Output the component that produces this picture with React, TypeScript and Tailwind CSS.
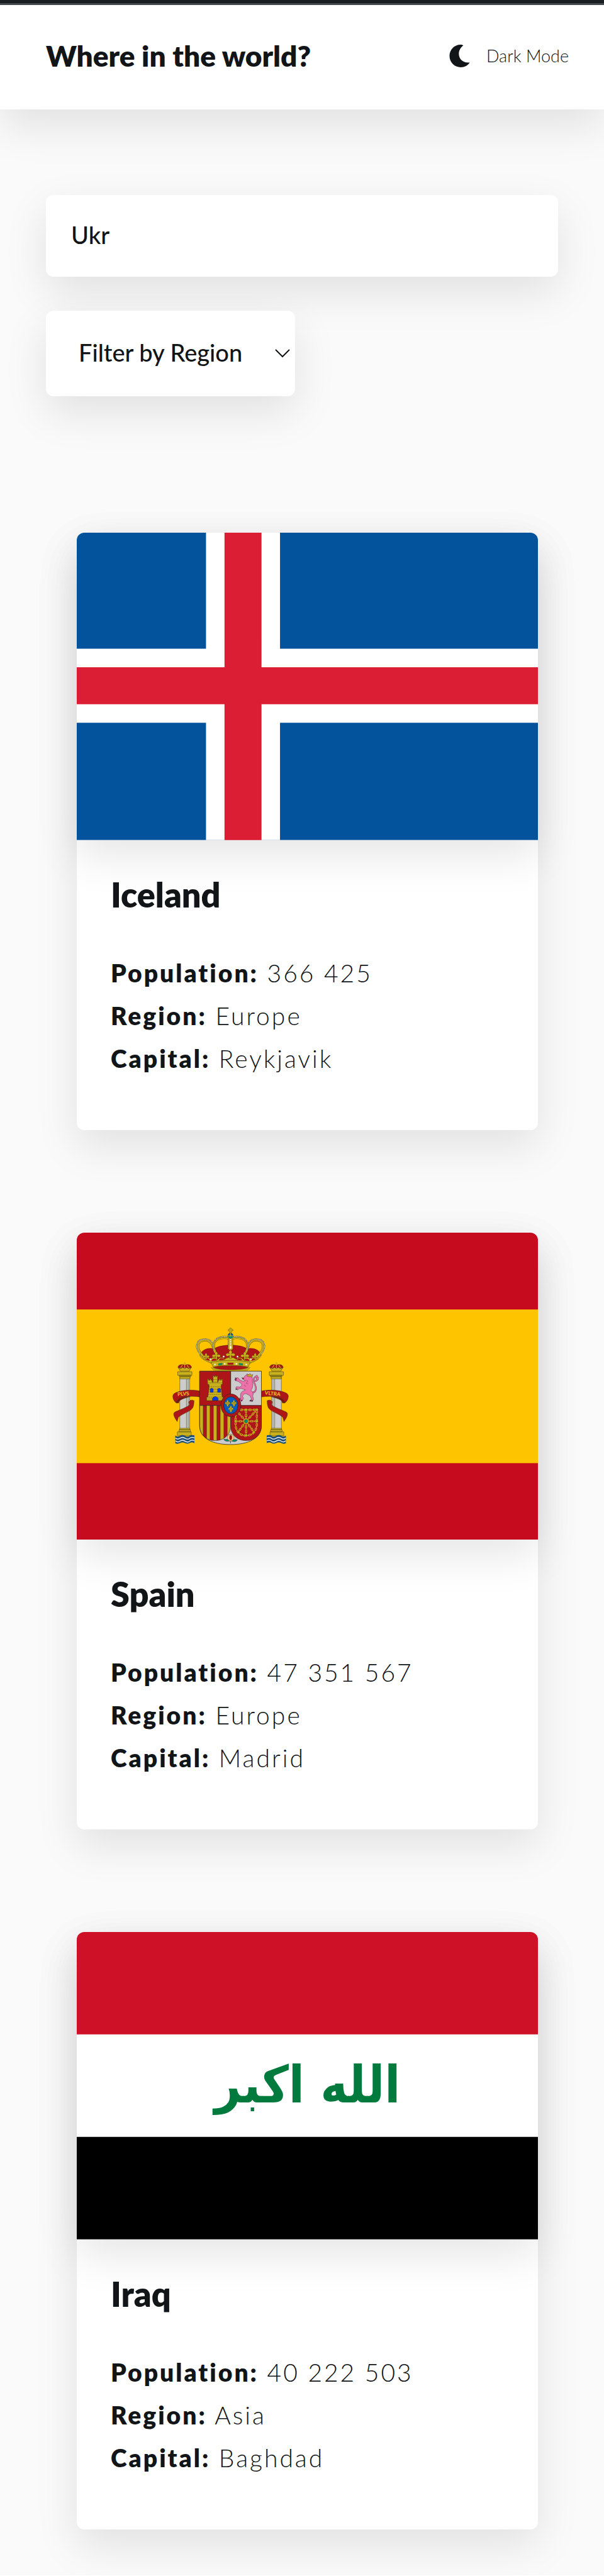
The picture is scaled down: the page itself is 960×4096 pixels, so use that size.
import { useState } from 'react';
import type { ReactNode } from 'react';

const SOFT_SHADOW = 'shadow-[0_25px_68px_rgba(0,0,0,0.1)]';

function IcelandFlag() {
  return (
    <svg viewBox="0 0 810 540" className="block size-full" role="img" aria-label="Flag of Iceland">
      <rect width="810" height="540" fill="#02529c" />
      <path d="M227 0H357V540H227ZM0 204H810V334H0Z" fill="#fff" />
      <path d="M259.500 0H324.500V540H259.500ZM0 236.500H810V301.500H0Z" fill="#dc1e35" />
    </svg>
  );
}

function Blossom({ x, y, s = 1 }: { x: number; y: number; s?: number }) {
  return (
    <g transform={`translate(${x} ${y}) scale(${s})`} fill="#c8b11d" stroke="#5a4a0c" strokeWidth="1.500">
      <path d="M0 -20C9 -14 9 -6 4 -1C12 -8 22 -4 22 3C20 11 10 11 4 5L5 20H-5L-4 5C-10 11 -20 11 -22 3C-22 -4 -12 -8 -4 -1C-9 -6 -9 -14 0 -20Z" />
    </g>
  );
}

function CrownArches() {
  return (
    <g fill="none" strokeLinecap="round">
      <path d="M198 186C158 145 168 104 212 104C238 104 252 124 260 160" stroke="#5a4a0c" strokeWidth="13" />
      <path d="M198 186C158 145 168 104 212 104C238 104 252 124 260 160" stroke="#c8b11d" strokeWidth="10" />
      <path d="M264 168C242 115 268 84 338 94" stroke="#5a4a0c" strokeWidth="13" />
      <path d="M264 168C242 115 268 84 338 94" stroke="#c8b11d" strokeWidth="10" />
      <path d="M188 182C150 140 164 99 212 99C232 99 244 108 252 122" stroke="#5a4a0c" strokeWidth="6" />
      <path d="M188 182C150 140 164 99 212 99C232 99 244 108 252 122" stroke="#fff" strokeWidth="4.500" strokeDasharray="0.100 7" />
      <path d="M257 156C242 112 268 80 334 88" stroke="#5a4a0c" strokeWidth="6" />
      <path d="M257 156C242 112 268 80 334 88" stroke="#fff" strokeWidth="4.500" strokeDasharray="0.100 7" />
    </g>
  );
}

function RoyalCrown() {
  return (
    <g>
      <path d="M188 178C198 150 236 142 258 152C285 124 406 124 433 152C455 142 493 150 504 178L448 226H243Z" fill="#ad1519" stroke="#3c0a0b" strokeWidth="1.500" />
      <CrownArches />
      <g transform="translate(691 0) scale(-1 1)"><CrownArches /></g>
      <path d="M333 96Q345 84 357 96L358 150Q345 166 332 150Z" fill="#c8b11d" stroke="#5a4a0c" strokeWidth="2" />
      <path d="M345 102V152" stroke="#fff" strokeWidth="6" strokeLinecap="round" strokeDasharray="0.100 9" />
      <circle cx="345" cy="141" r="5" fill="#fff" />
      <circle cx="345" cy="81" r="14" fill="#005bbf" stroke="#3d3a12" strokeWidth="2" />
      <path d="M331 82A14 14 0 0 0 359 82Z" fill="#058e6e" />
      <path d="M331 80H359V84H331ZM343 66H347V80H343Z" fill="#c8b11d" />
      <path d="M341 41H350V48H358V56H350V67H341V56H333V48H341Z" fill="#c8b11d" stroke="#5a4a0c" strokeWidth="1.500" />
      <path d="M182 182C194 186 202 198 206 206C214 190 234 190 238 209C248 190 270 190 276 209C286 192 308 192 314 208C324 191 366 191 376 208C382 192 404 192 414 209C420 190 442 190 452 209C456 190 476 190 484 206C488 198 496 186 508 182C500 206 474 214 449 226C400 214 291 214 242 226C217 214 190 206 182 182Z" fill="#c8b11d" stroke="#5a4a0c" strokeWidth="2" />
      <path d="M212 208C214 196 232 196 236 214ZM244 215C248 198 268 198 274 212ZM284 211C288 196 306 196 312 209ZM478 208C476 196 458 196 454 214ZM446 215C442 198 422 198 416 212ZM406 211C402 196 384 196 378 209Z" fill="#ad1519" />
      <Blossom x={345} y={179} s={1.1} />
      <Blossom x={270} y={185} />
      <Blossom x={421} y={185} />
      <Blossom x={216} y={189} s={0.8} />
      <Blossom x={475} y={189} s={0.8} />
      <g fill="#fff" stroke="#5a4a0c">
        <circle cx="309" cy="191" r="5" /><circle cx="382" cy="191" r="5" /><circle cx="240" cy="205" r="5" /><circle cx="452" cy="205" r="5" />
      </g>
      <path d="M242 221C300 209 392 209 449 221L438 247C390 236 302 236 254 247Z" fill="#c8b11d" stroke="#5a4a0c" strokeWidth="2" />
      <path d="M330 224H360V234H330Z" fill="#ad1519" stroke="#5a4a0c" />
      <path d="M281 228L302 225V234L281 238ZM389 225L410 228V238L389 234Z" fill="#058e6e" stroke="#5a4a0c" />
      <g fill="#fff"><circle cx="263" cy="233" r="4" /><circle cx="315" cy="229" r="4" /><circle cx="376" cy="229" r="4" /><circle cx="428" cy="233" r="4" /></g>
      <path d="M254 247C302 236 390 236 438 247C420 259 396 263 345 263C295 263 271 259 254 247Z" fill="#ad1519" stroke="#5a4a0c" strokeWidth="2" />
      <path d="M243 249C300 266 392 266 449 249L436 262C400 268 291 268 256 262Z" fill="#c8b11d" stroke="#5a4a0c" strokeWidth="1.500" />
    </g>
  );
}

function Pillar() {
  return (
    <g stroke="#3d3a12" strokeWidth="1.800" strokeLinejoin="round">
      <path d="M68 248C70 234 88 230 104 236C120 230 138 234 140 248L128 262H80Z" fill="#ad1519" />
      <path d="M104 220V238M98 226H110M82 250L92 236M126 250L116 236M104 236V254" stroke="#c8b11d" strokeWidth="4" fill="none" />
      <path d="M72 248L84 254L94 248L104 254L114 248L124 254L136 248L128 268H80Z" fill="#c8b11d" />
      <path d="M78 302H130V574H78Z" fill="#ccc" />
      <path d="M113 308V570M122 308V570" fill="none" />
      <path d="M67 271H142V290H67ZM75 290H136V297H75ZM78 297H132V309H78Z" fill="#c8b11d" />
      <path d="M77 569H131V577H77ZM74 577H134V588H74ZM65 588H138V608H65Z" fill="#c8b11d" />
      <path d="M54 607Q67 617 79 609T105 609T130 609T155 607V648Q142 640 130 647T105 647T79 647T54 648Z" fill="#1d4f75" stroke="none" />
      <path d="M55 621Q67 631 79 622T105 622T130 622T154 620M55 636Q67 646 79 637T105 637T130 637T154 635" fill="none" stroke="#dce6ee" strokeWidth="5" />
      <path d="M183 373C140 363 72 368 46 388C36 398 42 424 60 436C60 420 76 408 100 404C130 399 158 400 183 404Z" fill="#ad1519" />
      <path d="M60 436C60 420 76 408 100 404L132 402C104 412 74 416 72 436Z" fill="#7e1013" />
      <path d="M153 424C140 416 122 424 126 436C134 448 120 454 98 464C72 476 52 480 46 490C44 506 56 520 64 534L70 512C84 498 112 488 134 474C152 462 152 442 153 424Z" fill="#ad1519" />
    </g>
  );
}

function Fleur({ x, y }: { x: number; y: number }) {
  return (
    <path
      transform={`translate(${x} ${y})`}
      d="M0 -17C6 -10 6 -4 2 2C4 -8 15 -8 13 3C12 7 8 7 7 4L3 6H8V10H3L5 16L0 19L-5 16L-3 10H-8V6H-3L-7 4C-8 7 -12 7 -13 3C-15 -8 -4 -8 -2 2C-6 -4 -6 -10 0 -17Z"
      fill="#c8b11d" stroke="#3d3a12" strokeWidth="1"
    />
  );
}

function Chains() {
  const web = 'M372 472H484V548C482 588 458 608 427 608C394 608 372 584 372 548ZM427 532V472M427 532V608M427 532H372M427 532H484M427 532L372 472M427 532L484 472M427 532L386 588M427 532L468 588';
  return (
    <g fill="none">
      <path d={web} stroke="#c8b11d" strokeWidth="4" />
      <path d={web} stroke="#c8b11d" strokeWidth="11" strokeDasharray="14 9" />
      <path d={web} stroke="#ad1519" strokeWidth="4" strokeDasharray="8 15" strokeDashoffset="-3" />
      <g fill="#c8b11d" stroke="#3d3a12" strokeWidth="1">
        <circle cx="372" cy="472" r="7" /><circle cx="427" cy="472" r="7" /><circle cx="484" cy="472" r="7" /><circle cx="372" cy="532" r="7" />
        <circle cx="484" cy="532" r="7" /><circle cx="427" cy="607" r="7" /><circle cx="387" cy="590" r="7" /><circle cx="467" cy="590" r="7" />
      </g>
      <circle cx="427" cy="532" r="9" fill="#058e6e" />
    </g>
  );
}

function Shield() {
  return (
    <g strokeLinejoin="round">
      <path d="M182 268H508V555C508 622 440 655 345 655C250 655 182 622 182 555Z" fill="#ccc" stroke="#222" strokeWidth="2.500" />
      <path d="M183 269H346V449H183Z" fill="#ad1519" stroke="#222" strokeWidth="2" />
      <path d="M346 269V449H508" fill="none" stroke="#222" strokeWidth="2" />
      <clipPath id="aragon"><path d="M183 449H346V555C346 605 310 634 264 634C218 634 183 605 183 555Z" /></clipPath>
      <g clipPath="url(#aragon)">
        <path d="M183 449H346V640H183Z" fill="#c8b11d" />
        <path d="M201 449H219V640H201ZM237 449H255V640H237ZM273 449H291V640H273ZM310 449H328V640H310Z" fill="#ad1519" stroke="#4e2b0c" strokeWidth="1.500" />
      </g>
      <path d="M183 449H346V555C346 605 310 634 264 634C218 634 183 605 183 555Z" fill="none" stroke="#222" strokeWidth="2" />
      <path d="M346 449H508V555C508 605 473 634 427 634C381 634 346 605 346 555Z" fill="#ad1519" stroke="#222" strokeWidth="2" />
      <Chains />
      <g stroke="#3d3008" strokeWidth="1.800">
        <path d="M219 423V404H226L232 356V338H224V310H230V316H236V310H242V316H248V326H253V292H259V298H262V291H268V298H271V292H277V326H280V316H286V310H292V316H297V310H303V338H296V356L301 404H308V423Z" fill="#c8b11d" />
        <path d="M230 350H298M230 364H298M228 378H300M228 391H300M220 405H308M220 414H308M253 312H277M253 326H277M224 330H303" strokeDasharray="8 2" fill="none" strokeWidth="1.300" />
        <path d="M250 423V411Q265 392 280 411V423Z" fill="#0039f0" />
        <path d="M238 380V362Q246 354 254 362V380ZM277 380V362Q285 354 293 362V380Z" fill="#0039f0" />
      </g>
      <g stroke="#5c2a45" strokeWidth="1.800">
        <path d="M450 380C476 386 484 366 476 344C470 328 462 318 470 304L484 293V308L490 302C490 316 480 322 474 318" fill="none" strokeWidth="8" />
        <path d="M450 380C476 386 484 366 476 344C470 328 462 318 470 304L484 293V308L490 302C490 316 480 322 474 318" fill="none" stroke="#ed72aa" strokeWidth="5" />
        <path d="M418 298C424 284 446 282 456 294C464 306 458 320 462 332C464 350 460 362 452 370C464 376 468 388 462 398L466 416C464 430 450 430 446 424L456 416L448 398L430 388C418 384 412 392 408 402L414 410L406 426C398 428 390 420 392 410L400 406C394 394 400 376 414 372L424 366C414 366 404 356 392 360L382 368L372 358L376 350L392 352C404 348 408 340 402 334L386 322L370 318V306L384 302L394 314L412 322L424 318L408 310Z" fill="#ed72aa" />
        <path d="M434 295L432 282L441 288L448 280L453 289L463 286L458 299Z" fill="#c8b11d" />
        <path d="M404 303L416 305L412 311Z" fill="#ad1519" />
        <path d="M370 303L377 310M367 312L376 315M372 365L381 361M391 418L399 413M446 426L455 420M459 429L459 420M402 427L404 419" fill="none" stroke="#222" strokeWidth="4" />
        <path d="M430 315L436 322L428 330L438 336M418 340L424 350" fill="none" />
      </g>
      <ellipse cx="347" cy="448" rx="53" ry="60" fill="#ad1519" stroke="#222" strokeWidth="2" />
      <ellipse cx="347" cy="448" rx="37" ry="45" fill="#005bbf" stroke="#222" strokeWidth="2" />
      <Fleur x={330} y={436} />
      <Fleur x={363} y={436} />
      <Fleur x={347} y={466} />
      <path d="M345 633C330 642 316 638 309 628C324 626 338 628 345 633C352 628 366 626 382 630C374 642 358 642 345 633Z" fill="#058e6e" stroke="#222" strokeWidth="1.500" />
      <path d="M345 648V630" stroke="#333" strokeWidth="3" />
      <circle cx="346" cy="618" r="18" fill="#f5c98b" stroke="#7a5a0c" strokeWidth="2" />
      <ellipse cx="346" cy="618" rx="7" ry="13" fill="#9e1216" />
      <path d="M340 603L346 609L352 603" fill="none" stroke="#058e6e" strokeWidth="3" />
    </g>
  );
}

function SpainFlag() {
  return (
    <svg viewBox="0 0 810 540" className="block size-full" role="img" aria-label="Flag of Spain">
      <rect width="810" height="540" fill="#c60b1e" />
      <rect y="135" width="810" height="270" fill="#ffc400" />
      <g transform="translate(155 154) scale(0.33333)">
        <Pillar />
        <g transform="translate(691 0) scale(-1 1)"><Pillar /></g>
        <g fill="#f3c62a" className="font-['Lato'] text-[27px] font-bold">
          <text x="66" y="399" transform="rotate(-4 66 399)">PLVS</text>
          <text x="525" y="391" transform="rotate(6 525 391)">VLTRA</text>
        </g>
        <Shield />
        <RoyalCrown />
      </g>
    </svg>
  );
}

function IraqFlag() {
  return (
    <svg viewBox="0 0 810 540" className="block size-full" role="img" aria-label="Flag of Iraq">
      <rect width="810" height="180" fill="#ce1126" />
      <rect y="180" width="810" height="180" fill="#fff" />
      <rect y="360" width="810" height="180" fill="#000" />
      <text x="405" y="299" textAnchor="middle" direction="rtl" fill="#007a3d" className="font-['DejaVu_Sans_Condensed','DejaVu_Sans',sans-serif] text-[90px] font-bold">
        الله اكبر
      </text>
    </svg>
  );
}

type Country = { name: string; population: string; region: string; capital: string; flag: ReactNode };

const COUNTRIES: Country[] = [
  { name: 'Iceland', population: '366 425', region: 'Europe', capital: 'Reykjavik', flag: <IcelandFlag /> },
  { name: 'Spain', population: '47 351 567', region: 'Europe', capital: 'Madrid', flag: <SpainFlag /> },
  { name: 'Iraq', population: '40 222 503', region: 'Asia', capital: 'Baghdad', flag: <IraqFlag /> },
];

function Fact({ label, value }: { label: string; value: string }) {
  return (
    <p>
      <span className="font-extrabold">{label}:</span> {value}
    </p>
  );
}

function CountryCard({ country }: { country: Country }) {
  return (
    <article className={`rounded-xl bg-white ${SOFT_SHADOW}`}>
      <div className={`aspect-3/2 overflow-hidden rounded-t-xl ${SOFT_SHADOW}`}>{country.flag}</div>
      <div className="px-[54px] pt-[54px] pb-20">
        <h2 className="text-[54px] leading-[66px] font-extrabold">{country.name}</h2>
        <div className="mt-[57px] text-[39px] leading-[68px] font-light tracking-[3px]">
          <Fact label="Population" value={country.population} />
          <Fact label="Region" value={country.region} />
          <Fact label="Capital" value={country.capital} />
        </div>
      </div>
    </article>
  );
}

export default function App() {
  const [query, setQuery] = useState('Ukr');
  return (
    <div className="bg-[#fafafa] font-['Lato',sans-serif] text-[#111517]">
      <header className={`border-t-[5px] border-[#191d20] bg-white ${SOFT_SHADOW}`}>
        <div className="flex items-center justify-between border-t-3 border-[#44494d] pt-12 pr-14 pb-[52px] pl-[73px]">
          <h1 className="text-[46px] leading-[66px] font-extrabold">Where in the world?</h1>
          <button type="button" className="flex items-center gap-[26px] text-[27px] font-light">
            <svg viewBox="27 53 108 121" className="h-9 w-[33px]" fill="currentColor" aria-hidden="true">
              <path d="M101 57C97 54 91 53 86 53C53 53 27 80 27 113C27 148 54 174 87 174C108 174 126 164 135 148C105 153 77 134 77 102C77 84 86 68 101 57Z" />
            </svg>
            Dark Mode
          </button>
        </div>
      </header>
      <main className="px-[73px] pt-[136px] pb-[73px]">
        <input
          type="text"
          aria-label="Search for a country"
          value={query}
          onChange={(e) => setQuery(e.target.value)}
          className={`block h-[130px] w-full rounded-xl bg-white px-10 pb-1 text-[38px] font-medium outline-none ${SOFT_SHADOW}`}
        />
        <div className="relative mt-[54px] w-[396px]">
          <select
            aria-label="Filter by Region"
            className={`block h-[136px] w-full appearance-none rounded-xl bg-white pb-1 pl-[52px] text-[38px] font-medium outline-none ${SOFT_SHADOW}`}
          >
            <option>Filter by Region</option>
            <option>Africa</option>
            <option>America</option>
            <option>Asia</option>
            <option>Europe</option>
            <option>Oceania</option>
          </select>
          <div className="pointer-events-none absolute inset-y-0 right-2 flex items-center">
            <svg viewBox="0 0 24 14" className="h-3.5 w-6" fill="none" stroke="currentColor" strokeWidth="2" aria-hidden="true">
              <path d="M1 1L12 12L23 1" />
            </svg>
          </div>
        </div>
        <section className="mt-[217px] mr-8 ml-[49px] flex flex-col gap-[163px]">
          {COUNTRIES.map((c) => (
            <CountryCard key={c.name} country={c} />
          ))}
        </section>
      </main>
    </div>
  );
}
